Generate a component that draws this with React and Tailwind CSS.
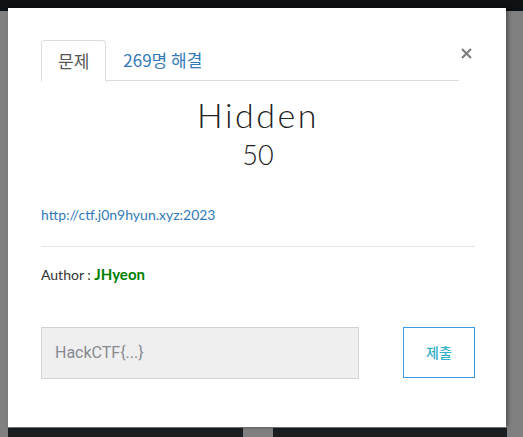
import React from "react";

const kr = { fontFamily: '"Noto Sans CJK KR", "Noto Sans", sans-serif' };
const lato = { fontFamily: 'Lato, "Noto Sans CJK KR", sans-serif' };

const App = () => {
  return (
    <div className="relative w-[523px] h-[437px] bg-[#808080] overflow-hidden">
      <div className="h-[11px] bg-[#0d1113]" />
      <div className="absolute left-[8px] bottom-0 flex h-[9px] w-[499px]">
        <div className="w-[235px] bg-[#1b1e21]" />
        <div className="w-[30px] bg-[#808080]" />
        <div className="flex-1 bg-[#1b1e21]" />
      </div>

      <div className="absolute left-[8px] top-[8px] w-[498px] h-[419px] bg-white shadow-[2px_0_4px_rgba(0,0,0,0.4)] pl-[33px] pr-[31px] pt-[32px]">
        <div className="flex items-start">
          <ul className="flex flex-1 border-b border-[#dddddd] h-[41px]" style={kr}>
            <li className="h-[42px] px-[16px] flex items-center border border-[#dddddd] border-b-white rounded-t-[4px] bg-white text-[17px] text-[#555555] mr-[2px]">
              문제
            </li>
            <li className="px-[15px] flex items-center text-[17px] text-[#337ab7]">
              269명 해결
            </li>
          </ul>
          <button className="ml-[1px] mr-[3px] mt-[7px] w-[12px] h-[12px] flex items-center justify-center">
            <svg width="11" height="11" viewBox="0 0 11 11">
              <path d="M1 1L10 10M10 1L1 10" stroke="#7a7a7a" strokeWidth="2" />
            </svg>
          </button>
        </div>

        <div className="text-center text-[#222222]" style={lato}>
          <h2 className="mt-[14px] text-[34px] font-light leading-[40px] tracking-[2.5px]">Hidden</h2>
          <h3 className="mt-[5px] text-[27px] font-light leading-[30px]">50</h3>
        </div>

        <div className="mt-[34px] text-[14px] text-[#337ab7]" style={lato}>
          http://ctf.j0n9hyun.xyz:2023
        </div>
        <hr className="mt-[21px] border-[#e5e5e5]" />
        <div className="mt-[16px] text-[14px] text-[#333333]" style={lato}>
          Author : <span className="font-bold text-[15px] text-[#008000]">JHyeon</span>
        </div>

        <div className="mt-[41px] flex items-start justify-between">
          <div className="w-[318px] h-[52px] bg-[#efefef] border border-[#cfd4da] flex items-center pl-[13px] text-[16px] text-[#868b91]" style={{ fontFamily: 'Roboto, sans-serif' }}>
            HackCTF{"{...}"}
          </div>
          <button className="w-[72px] h-[51px] border border-[#3a9be9] text-[14px] font-medium text-[#33b0c8] bg-white" style={kr}>
            제출
          </button>
        </div>
      </div>
    </div>
  );
};

export default App;
